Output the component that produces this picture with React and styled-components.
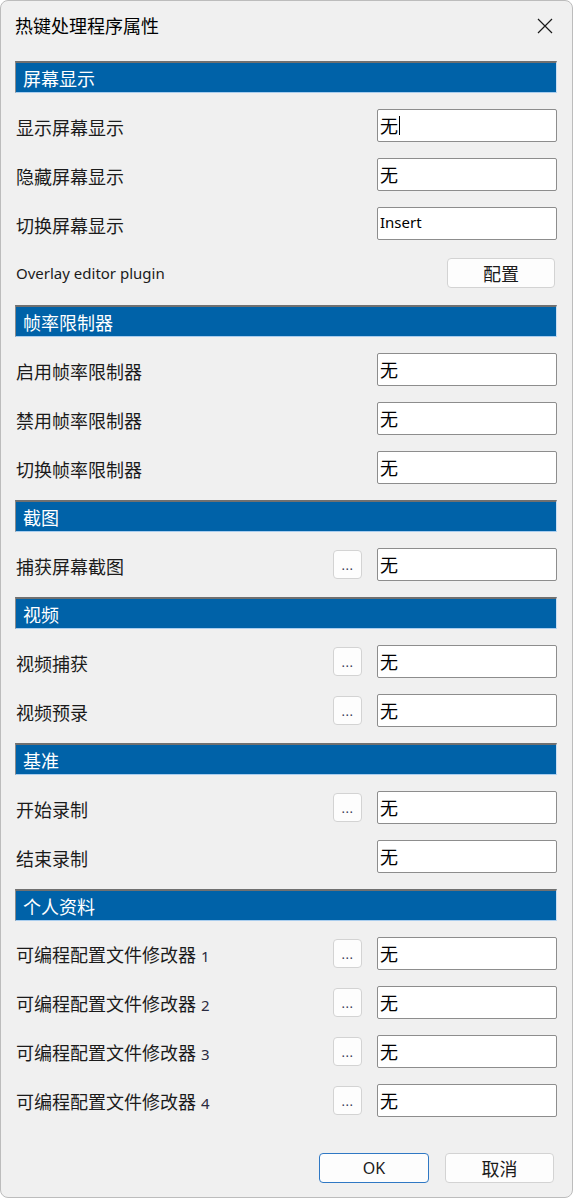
import React from "react";
import styled, { createGlobalStyle } from "styled-components";

const GlobalStyle = createGlobalStyle`
  html, body { margin: 0; padding: 0; background: #ffffff; }
  * { box-sizing: border-box; }
  body { font-family: "Noto Sans", "Noto Sans CJK SC", sans-serif; }
`;

const CJK = `"Noto Sans CJK SC", "Noto Sans", sans-serif`;
const LATIN = `"Noto Sans", "Open Sans", "Noto Sans CJK SC", sans-serif`;

const Window = styled.div`
  width: 573px;
  height: 1198px;
  border: 1px solid #bcbcbc;
  border-radius: 8px;
  background: #f0f0f0;
  display: flex;
  flex-direction: column;
  overflow: hidden;
`;

const TitleBar = styled.div`
  height: 49px;
  display: flex;
  align-items: center;
  justify-content: space-between;
  padding: 0 19px 0 14px;
`;

const Title = styled.div`
  font-family: ${CJK};
  font-size: 18px;
  color: #000;
  line-height: 1;
  margin-top: -2px;
`;

const CloseButton = styled.div`
  width: 16px;
  height: 16px;
  display: flex;
  align-items: center;
  justify-content: center;
`;

const Content = styled.div`
  display: flex;
  flex-direction: column;
  gap: 16px;
  padding: 11px 15px 0 14px;
`;

const SectionHeader = styled.div`
  height: 32px;
  background: #0062a8;
  border-top: 2px solid #707070;
  border-left: 1px solid #8a8a8a;
  border-bottom: 1px solid #a9cdee;
  border-right: 1px solid #c9def2;
  padding-left: 7px;
  display: flex;
  align-items: center;
  color: #ffffff;
  font-family: ${CJK};
  font-size: 18px;
  line-height: 1;
`;

const Row = styled.div`
  height: 33px;
  display: flex;
  align-items: center;
`;

const Label = styled.div`
  flex: 1;
  font-family: ${(p) => (p.$latin ? LATIN : CJK)};
  font-size: ${(p) => (p.$latin ? "15px" : "18px")};
  color: #1b1b1b;
  padding-left: 1px;
  line-height: 1;
  padding-top: 2px;
`;

const Num = styled.span`
  font-family: ${LATIN};
  font-size: 15px;
  color: #2a2a40;
  margin-left: 5px;
`;

const DotsButton = styled.div`
  width: 29px;
  height: 29px;
  margin-right: 15px;
  background: #fdfdfd;
  border: 1px solid #d3d3d3;
  border-radius: 4px;
  display: flex;
  align-items: flex-end;
  justify-content: center;
  padding-bottom: 6px;
  font-family: ${LATIN};
  font-size: 13px;
  line-height: 1;
  color: #3a3a5a;
  letter-spacing: 0.5px;
`;

const Field = styled.div`
  width: 180px;
  height: 33px;
  background: #ffffff;
  border: 1px solid #8d8d8d;
  border-radius: 2px;
  padding-left: 2px;
  display: flex;
  align-items: center;
  font-family: ${(p) => (p.$latin ? LATIN : CJK)};
  font-size: ${(p) => (p.$latin ? "15px" : "18px")};
  line-height: 1;
  color: #000;
  padding-bottom: ${(p) => (p.$latin ? "3px" : "1px")};
`;

const Caret = styled.span`
  display: inline-block;
  width: 1px;
  height: 19px;
  background: #000;
  margin-left: 1px;
`;

const PushButton = styled.div`
  width: ${(p) => p.$w || 108}px;
  height: 30px;
  background: #fdfdfd;
  border: 1px solid ${(p) => (p.$primary ? "#2f78c4" : "#d3d3d3")};
  border-radius: 4px;
  display: flex;
  align-items: center;
  justify-content: center;
  font-family: ${(p) => (p.$latin ? LATIN : CJK)};
  font-size: ${(p) => (p.$latin ? "16px" : "18px")};
  line-height: 1;
  color: #1b1b1b;
  margin-right: ${(p) => p.$mr || 0}px;
`;

const Footer = styled.div`
  margin-top: auto;
  display: flex;
  justify-content: flex-end;
  gap: 16px;
  padding: 0 18px 14px 0;
`;

const sections = [
  {
    title: "屏幕显示",
    rows: [
      { label: "显示屏幕显示", value: "无", caret: true },
      { label: "隐藏屏幕显示", value: "无" },
      { label: "切换屏幕显示", value: "Insert", latin: true },
      { label: "Overlay editor plugin", plugin: true },
    ],
  },
  {
    title: "帧率限制器",
    rows: [
      { label: "启用帧率限制器", value: "无" },
      { label: "禁用帧率限制器", value: "无" },
      { label: "切换帧率限制器", value: "无" },
    ],
  },
  {
    title: "截图",
    rows: [{ label: "捕获屏幕截图", value: "无", dots: true }],
  },
  {
    title: "视频",
    rows: [
      { label: "视频捕获", value: "无", dots: true },
      { label: "视频预录", value: "无", dots: true },
    ],
  },
  {
    title: "基准",
    rows: [
      { label: "开始录制", value: "无", dots: true },
      { label: "结束录制", value: "无" },
    ],
  },
  {
    title: "个人资料",
    rows: [1, 2, 3, 4].map((n) => ({
      label: "可编程配置文件修改器",
      num: n,
      value: "无",
      dots: true,
    })),
  },
];

export default function App() {
  return (
    <>
      <GlobalStyle />
      <Window>
        <TitleBar>
          <Title>热键处理程序属性</Title>
          <CloseButton>
            <svg width="16" height="16" viewBox="0 0 16 16">
              <path d="M1 1 L15 15 M15 1 L1 15" stroke="#1a1a1a" strokeWidth="1.2" fill="none" />
            </svg>
          </CloseButton>
        </TitleBar>
        <Content>
          {sections.map((s) => (
            <React.Fragment key={s.title}>
              <SectionHeader>{s.title}</SectionHeader>
              {s.rows.map((r, i) =>
                r.plugin ? (
                  <Row key={i}>
                    <Label $latin>{r.label}</Label>
                    <PushButton $w={108} $mr={2}>配置</PushButton>
                  </Row>
                ) : (
                  <Row key={i}>
                    <Label>
                      {r.label}
                      {r.num ? <Num>{r.num}</Num> : null}
                    </Label>
                    {r.dots ? <DotsButton>...</DotsButton> : null}
                    <Field $latin={r.latin}>
                      {r.value}
                      {r.caret ? <Caret /> : null}
                    </Field>
                  </Row>
                )
              )}
            </React.Fragment>
          ))}
        </Content>
        <Footer>
          <PushButton $primary $latin $w={110}>OK</PushButton>
          <PushButton $w={109}>取消</PushButton>
        </Footer>
      </Window>
    </>
  );
}
